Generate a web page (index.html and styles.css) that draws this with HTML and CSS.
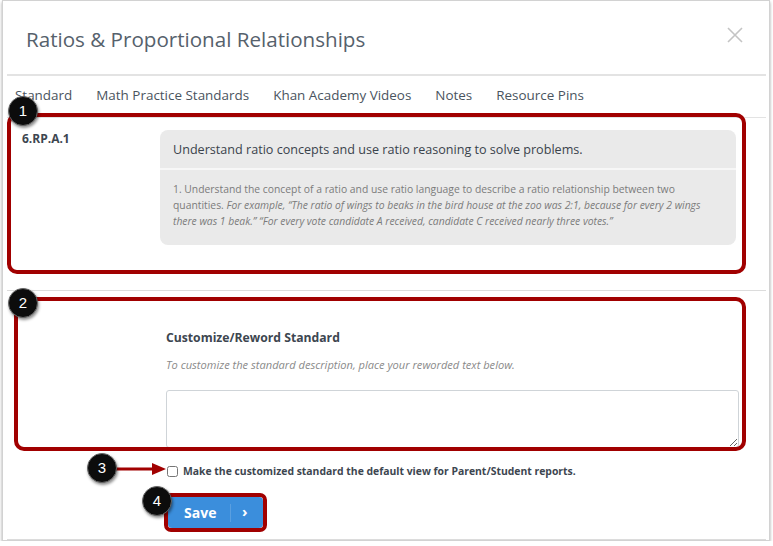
FILE: index.html
```html
<!DOCTYPE html>
<html lang="en">
<head>
<meta charset="utf-8">
<title>Ratios &amp; Proportional Relationships</title>
<link rel="stylesheet" href="styles.css">
</head>
<body>
<div class="dialog">
  <header class="header">
    <h1 class="title">Ratios &amp; Proportional Relationships</h1>
    <svg class="close" width="16" height="16" viewBox="0 0 16 16" aria-label="Close"><path d="M1 1 L15 15 M15 1 L1 15" stroke="#c4c4c4" stroke-width="1.6" fill="none"/></svg>
  </header>
  <nav class="tabs">
    <span class="tab">Standard</span>
    <span class="tab">Math Practice Standards</span>
    <span class="tab">Khan Academy Videos</span>
    <span class="tab">Notes</span>
    <span class="tab">Resource Pins</span>
  </nav>
  <section class="standard">
    <div class="code">6.RP.A.1</div>
    <div class="std-box">
      <div class="std-head">Understand ratio concepts and use ratio reasoning to solve problems.</div>
      <div class="std-body">1. Understand the concept of a ratio and use ratio language to describe a ratio relationship between two quantities. <em>For example, “The ratio of wings to beaks in the bird house at the zoo was 2:1, because for every 2 wings there was 1 beak.” “For every vote candidate A received, candidate C received nearly three votes.”</em></div>
    </div>
  </section>
  <section class="customize">
    <h2 class="cust-title">Customize/Reword Standard</h2>
    <p class="cust-hint">To customize the standard description, place your reworded text below.</p>
    <textarea class="cust-text"></textarea>
    <label class="check-row"><input type="checkbox" class="check"><span>Make the customized standard the default view for Parent/Student reports.</span></label>
    <button class="save"><span class="save-label">Save</span><span class="save-sep"></span><span class="save-arrow">›</span></button>
  </section>
</div>

<div class="ann ann-box1"></div>
<div class="ann ann-box2"></div>
<div class="ann ann-box3"></div>
<svg class="ann-arrow" width="52" height="16" viewBox="0 0 52 16"><path d="M0 8 H40" stroke="#a10000" stroke-width="3"/><path d="M36 2 L50 8 L36 14 Z" fill="#a10000"/></svg>
<div class="badge b1">1</div>
<div class="badge b2">2</div>
<div class="badge b3">3</div>
<div class="badge b4">4</div>
</body>
</html>
```
FILE: styles.css
```css
* { box-sizing: border-box; }
body {
  margin: 0;
  font-family: "Open Sans", "Liberation Sans", sans-serif;
  background: #ffffff;
  color: #3d4650;
}
.dialog {
  margin-left: 2px;
  width: 768px;
  height: 541px;
  border: 1px solid #d2d2d2;
  box-shadow: 0 2px 3px rgba(0,0,0,0.35);
  background: #fff;
  display: flex;
  flex-direction: column;
}
.header {
  margin: 0 3px 0 4px;
  height: 75px;
  border-bottom: 2px solid #e3e3e3;
  display: flex;
  justify-content: space-between;
  align-items: flex-start;
  padding: 0 23px 0 19px;
}
.title {
  margin: 23px 0 0 0;
  font-size: 20.6px;
  line-height: 30px;
  font-weight: 400;
  color: #56616c;
}
.close { margin-top: 26px; }
.tabs {
  margin: 0 3px 0 4px;
  height: 42px;
  border-bottom: 1px solid #e3e3e3;
  display: flex;
  gap: 24px;
  padding: 9px 0 0 8px;
  font-size: 13.45px;
  line-height: 20px;
  color: #4a545e;
}
.standard {
  margin: 0 3px 0 4px;
  height: 173px;
  border-bottom: 1px solid #dcdcdc;
  display: flex;
  padding: 12px 0 0 15px;
}
.code {
  width: 138px;
  font-size: 12px;
  font-weight: 700;
  line-height: 18px;
  color: #3d4650;
}
.std-box {
  width: 576px;
  height: 115px;
  background: #eaeaea;
  border-radius: 8px;
}
.std-head {
  height: 40px;
  padding: 11px 13px 0;
  font-size: 12.6px;
  line-height: 18px;
  color: #3a434c;
  border-bottom: 2px solid #f7f7f7;
}
.std-body {
  padding: 11px 13px 0;
  font-size: 10.35px;
  line-height: 16px;
  color: #7b7b7b;
}
.customize {
  margin: 0 3px 0 4px;
  flex: 1;
  border-bottom: 1px solid #dcdcdc;
  padding: 38px 0 0 159px;
}
.cust-title {
  margin: 0;
  font-size: 12.2px;
  line-height: 18px;
  font-weight: 700;
  color: #3d4650;
}
.cust-hint {
  margin: 10px 0 0;
  font-size: 11.1px;
  line-height: 16px;
  font-style: italic;
  font-weight: 400;
  color: #8a8a8a;
}
.cust-text {
  display: block;
  margin-top: 17px;
  width: 573px;
  height: 58px;
  border: 1px solid #cfd4d8;
  border-radius: 3px;
  resize: vertical;
  font-family: inherit;
}
.check-row {
  display: flex;
  align-items: center;
  margin-top: 15px;
  font-size: 10.4px;
  font-weight: 700;
  color: #3d4650;
  line-height: 16px;
}
.check {
  margin: 0 5px 0 1px;
  width: 11px;
  height: 11px;
}
.save {
  margin: 18px 0 0 2px;
  width: 95px;
  height: 31px;
  border: none;
  border-radius: 4px;
  background: #3b8edc;
  color: #fff;
  display: flex;
  align-items: center;
  padding: 0 0 0 16px;
  font-family: inherit;
}
.save-label {
  font-size: 14px;
  font-weight: 700;
  width: 46px;
  text-align: left;
}
.save-sep {
  width: 1px;
  height: 18px;
  background: #5a9fe0;
}
.save-arrow {
  margin-left: 11px;
  font-size: 15px;
  font-weight: 700;
  line-height: 1;
  margin-top: -2px;
}

/* annotations */
.ann {
  position: absolute;
  border: 4px solid #a10000;
  border-radius: 10px;
}
.ann-box1 { left: 7px; top: 113px; width: 739px; height: 161px; }
.ann-box2 { left: 14px; top: 297px; width: 732px; height: 154px; }
.ann-box3 { left: 164px; top: 493px; width: 103px; height: 39px; border-radius: 7px; }
.ann-arrow { position: absolute; left: 116px; top: 461px; }
.badge {
  position: absolute;
  width: 30px;
  height: 30px;
  border-radius: 50%;
  background: #0c0c0c;
  border: 1px solid #666;
  color: #fff;
  font-family: "Liberation Sans", Arial, sans-serif;
  font-size: 15px;
  line-height: 28px;
  text-align: center;
  box-shadow: 1px 2px 3px rgba(0,0,0,0.45);
}
.b1 { left: 8px; top: 96px; }
.b2 { left: 8px; top: 288px; }
.b3 { left: 87px; top: 453px; }
.b4 { left: 142px; top: 486px; }
```
